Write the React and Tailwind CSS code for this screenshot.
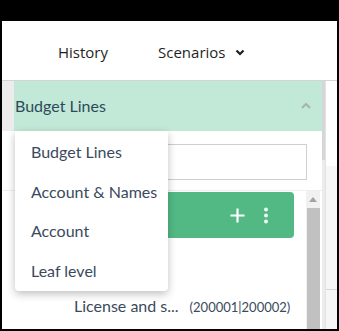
import React from "react";

export default function App() {
  return (
    <div className="w-[339px] h-[331px] bg-black pt-[21px] pl-[2px] pr-[2px] pb-[2px] overflow-hidden">
      <div className="w-[335px] h-[308px] bg-white flex flex-col">
        {/* header */}
        <div className="h-[60px] border-b border-[#d4d4d4] flex items-center pt-[3px] text-[15px] text-[#1f1f1f]" style={{ fontFamily: '"Open Sans", "Noto Sans", sans-serif' }}>
          <span className="ml-[56px]">History</span>
          <span className="ml-[50px]">Scenarios</span>
          <svg className="ml-[10px]" width="10" height="7" viewBox="0 0 10 7">
            <path d="M1.5 1.5 L5 5 L8.5 1.5" stroke="#1f1f1f" strokeWidth="2.2" fill="none" />
          </svg>
        </div>
        {/* body */}
        <div className="relative flex-1 flex" style={{ fontFamily: 'Lato, "Noto Sans", sans-serif' }}>
          <div className="w-[320px] flex flex-col">
            <div className="flex h-[50px]">
              <div className="w-[12px] bg-[#ececec]" />
              <div className="flex-1 bg-[#c2e8d7] flex items-center justify-between pl-[1px] pr-[10px]">
                <span className="text-[16px] text-[#2e4a5a]">Budget Lines</span>
                <svg width="12" height="8" viewBox="0 0 12 8">
                  <path d="M2 6 L6 2 L10 6" stroke="#a9b3b0" strokeWidth="2" fill="none" />
                </svg>
              </div>
            </div>
            <div className="h-[60px] pt-[13px] pl-[13px] pr-[15px] border-b border-[#efefef]">
              <div className="h-[36px] border border-[#cfcfcf] bg-white" />
            </div>
            <div className="flex flex-1">
              <div className="flex-1 flex flex-col pl-[13px]">
                <div className="h-[46px] mt-[1px] bg-[#52b985] rounded-[4px] flex items-center justify-end pr-[25px]">
                  <svg width="15" height="15" viewBox="0 0 15 15">
                    <path d="M7.5 0.5 V14.5 M0.5 7.5 H14.5" stroke="white" strokeWidth="2.2" />
                  </svg>
                  <svg className="ml-[18px]" width="6" height="17" viewBox="0 0 6 17">
                    <circle cx="3" cy="2.5" r="2" fill="#eef7f2" />
                    <circle cx="3" cy="8.5" r="2" fill="#eef7f2" />
                    <circle cx="3" cy="14.5" r="2" fill="#eef7f2" />
                  </svg>
                </div>
                <div className="flex items-baseline mt-[56px] pl-[59px]">
                  <span className="text-[16px] text-[#3a4a5c]">License and s...</span>
                  <span className="ml-[11px] text-[13px] text-[#3a4a5c]">(200001|200002)</span>
                </div>
              </div>
              <div className="w-[14px] ml-[12px] bg-[#f1f1f1] flex flex-col items-center">
                <svg className="mt-[6px]" width="8" height="5" viewBox="0 0 8 5">
                  <path d="M0 5 L4 0 L8 5 Z" fill="#a3a3a3" />
                </svg>
                <div className="mt-[6px] w-[13px] flex-1 bg-[#c1c1c1]" />
              </div>
              <div className="w-[2px]" />
            </div>
          </div>
          <div className="w-[3px] flex flex-col">
            <div className="h-[79px] bg-[#d6d6d6]" />
            <div className="flex-1 bg-[#ececec]" />
          </div>
          <div className="flex-1 flex flex-col border-l border-[#e2e2e2]">
            <div className="h-[85px] bg-white" />
            <div className="h-[124px] bg-[#f6f6f6] border-b border-[#d8d8d8]" />
            <div className="flex-1 bg-[#f6f6f6]" />
          </div>
          {/* dropdown */}
          <div className="absolute left-[13px] top-[50px] w-[153px] h-[160px] bg-white rounded-b-[4px] shadow-[0_3px_8px_rgba(0,0,0,0.25)] flex flex-col pt-[1px]">
            {["Budget Lines", "Account & Names", "Account", "Leaf level"].map((t) => (
              <div key={t} className="h-[40px] flex items-center pl-[16px] text-[16px] text-[#3a4a5c]">
                {t}
              </div>
            ))}
          </div>
        </div>
      </div>
    </div>
  );
}
